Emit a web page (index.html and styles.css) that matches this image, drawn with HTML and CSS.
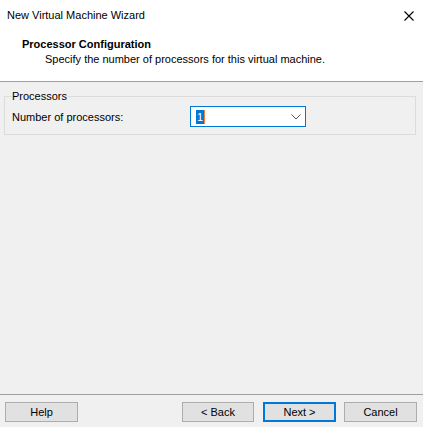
FILE: index.html
```html
<!DOCTYPE html>
<html>
<head>
<meta charset="utf-8">
<link rel="stylesheet" href="styles.css">
</head>
<body>
<div class="window">
  <div class="top">
    <div class="titlebar">
      <span class="title">New Virtual Machine Wizard</span>
      <svg class="close" width="10" height="10" viewBox="0 0 10 10"><path d="M0.5 0.5 L9.5 9.5 M9.5 0.5 L0.5 9.5" stroke="#000" stroke-width="1.1" fill="none"/></svg>
    </div>
    <div class="header">
      <div class="h-title">Processor Configuration</div>
      <div class="h-sub">Specify the number of processors for this virtual machine.</div>
    </div>
  </div>
  <div class="body">
    <fieldset class="group">
      <legend>Processors</legend>
      <div class="row">
        <label class="lbl">Number of processors:</label>
        <div class="combo">
          <span class="sel">1</span><span class="caret"></span>
          <svg class="chev" width="10" height="6" viewBox="0 0 10 6"><path d="M0.5 0.5 L5 5 L9.5 0.5" stroke="#555" stroke-width="1" fill="none"/></svg>
        </div>
      </div>
    </fieldset>
  </div>
  <div class="footer">
    <button class="btn">Help</button>
    <div class="right">
      <button class="btn back">&lt; Back</button>
      <button class="btn primary">Next &gt;</button>
      <button class="btn">Cancel</button>
    </div>
  </div>
</div>
</body>
</html>
```
FILE: styles.css
```css
html, body {
  margin: 0;
  padding: 0;
  width: 423px;
  height: 427px;
  overflow: hidden;
  background: #f0f0f0;
}
.window {
  width: 423px;
  height: 427px;
  display: flex;
  flex-direction: column;
  font-family: "Liberation Sans", Arial, sans-serif;
  font-size: 11px;
  color: #000;
}
.top {
  background: #fff;
  height: 81px;
  border-bottom: 1px solid #a0a0a0;
  box-sizing: content-box;
}
.titlebar {
  height: 30px;
  display: flex;
  align-items: center;
  justify-content: space-between;
  padding: 0 9px 0 7px;
}
.title {
  line-height: 14px;
  margin-top: 0px;
}
.close {
  margin-top: 2px;
}
.header {
  padding: 7px 0 0 22px;
}
.h-title {
  font-weight: bold;
  line-height: 14px;
}
.h-sub {
  padding-left: 23px;
  line-height: 14px;
  margin-top: 1px;
}
.body {
  flex: 1;
  padding: 7px 7px 0 4px;
}
.group {
  margin: 0;
  padding: 0 7px 7px 7px;
  border: 1px solid #dcdcdc;
  min-width: 0;
}
.group legend {
  padding: 0 1px;
  margin-left: -1px;
  line-height: 14px;
}
.row {
  display: flex;
  align-items: center;
  margin-top: 3px;
}
.lbl {
  width: 178px;
}
.combo {
  position: relative;
  width: 116px;
  height: 21px;
  box-sizing: border-box;
  border: 1px solid #0078d7;
  background: #fff;
  display: flex;
  align-items: center;
  padding-left: 5px;
}
.sel {
  background: #0078d7;
  color: #fff;
  line-height: 14px;
  height: 14px;
  padding: 0 1px;
}
.caret {
  width: 1px;
  height: 14px;
  background: #f08040;
}
.chev {
  position: absolute;
  right: 4px;
  top: 7px;
}
.footer {
  border-top: 1px solid #a0a0a0;
  height: 33px;
  box-sizing: border-box;
  display: flex;
  justify-content: space-between;
  align-items: flex-start;
  padding: 7px 6px 0 5px;
}
.right {
  display: flex;
  gap: 8px;
}
.btn {
  width: 73px;
  height: 20px;
  box-sizing: border-box;
  border: 1px solid #adadad;
  background: #e1e1e1;
  font-family: "Liberation Sans", Arial, sans-serif;
  font-size: 11px;
  color: #000;
  padding: 0;
  line-height: 16px;
}
.btn.back {
  width: 72px;
  margin-right: 1px;
}
.btn.primary {
  border: 2px solid #0078d7;
}
```
